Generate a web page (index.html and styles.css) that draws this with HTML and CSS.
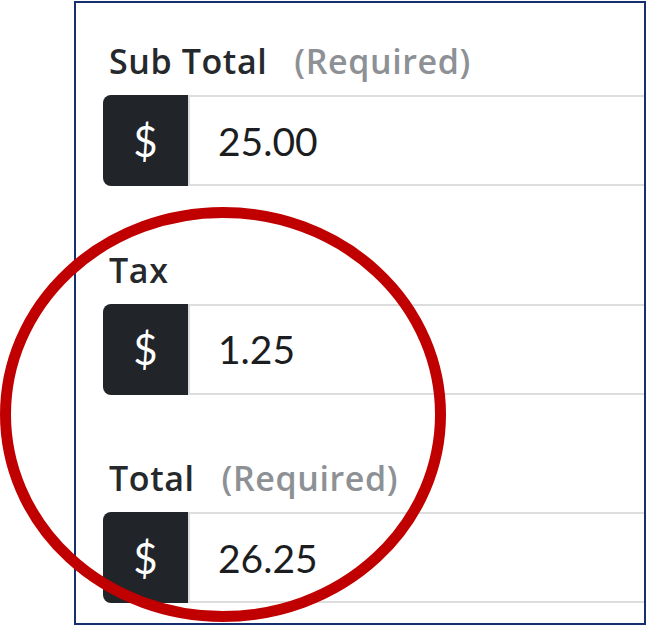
FILE: index.html
```html
<!DOCTYPE html>
<html lang="en">
<head>
<meta charset="utf-8">
<title>Receipt amounts</title>
<link rel="stylesheet" href="styles.css">
</head>
<body>
  <div class="panel">
    <div class="field">
      <label class="field-label" for="subtotal">Sub Total<span class="req">(Required)</span></label>
      <div class="input-group">
        <span class="addon">$</span>
        <input class="amount" id="subtotal" type="text" value="25.00">
      </div>
    </div>
    <div class="field">
      <label class="field-label" for="tax">Tax</label>
      <div class="input-group">
        <span class="addon">$</span>
        <input class="amount" id="tax" type="text" value="1.25">
      </div>
    </div>
    <div class="field">
      <label class="field-label" for="total">Total<span class="req">(Required)</span></label>
      <div class="input-group">
        <span class="addon">$</span>
        <input class="amount" id="total" type="text" value="26.25">
      </div>
    </div>
  </div>

  <!-- highlight ring around the tax and total fields -->
  <svg class="highlight" width="648" height="627" viewBox="0 0 648 627" aria-hidden="true">
    <ellipse cx="223" cy="414.5" rx="217.5" ry="202" fill="none" stroke="#c00000" stroke-width="11"/>
  </svg>
</body>
</html>
```

FILE: styles.css
```css
html, body {
  margin: 0;
  padding: 0;
  background: #ffffff;
}

body {
  position: relative;
  width: 648px;
  height: 627px;
  overflow: hidden;
  padding: 1px 0 0 74px;
  box-sizing: border-box;
  font-family: Lato, "Open Sans", sans-serif;
}

.panel {
  box-sizing: border-box;
  width: 572px;
  height: 624px;
  border: 2px solid #15306e;
  overflow: hidden;
  padding: 38px 0 0 27px;
  display: flex;
  flex-direction: column;
  gap: 63.5px;
}

.field {
  display: flex;
  flex-direction: column;
  gap: 14px;
}

.field-label {
  display: block;
  height: 40px;
  line-height: 40px;
  font-family: "Open Sans", Lato, sans-serif;
  font-size: 34px;
  font-weight: 600;
  letter-spacing: 0.6px;
  color: #26292c;
  padding-left: 6px;
  white-space: nowrap;
}

.req {
  margin-left: 27px;
  color: #8d9195;
}

.input-group {
  display: flex;
  height: 91px;
  width: 700px;
}

.addon {
  flex: 0 0 85px;
  display: flex;
  align-items: center;
  justify-content: center;
  background: #212428;
  color: #ffffff;
  font-size: 42px;
  font-weight: 400;
  border-radius: 8px 0 0 8px;
}

.amount {
  flex: 1;
  box-sizing: border-box;
  height: 91px;
  margin: 0;
  border: 2px solid #dddddd;
  border-radius: 0;
  padding: 0 0 0 28px;
  font-family: Lato, "Open Sans", sans-serif;
  font-size: 39px;
  color: #1b1d1f;
  background: #ffffff;
  outline: none;
}

.highlight {
  position: absolute;
  left: 0;
  top: 0;
  pointer-events: none;
}
```
